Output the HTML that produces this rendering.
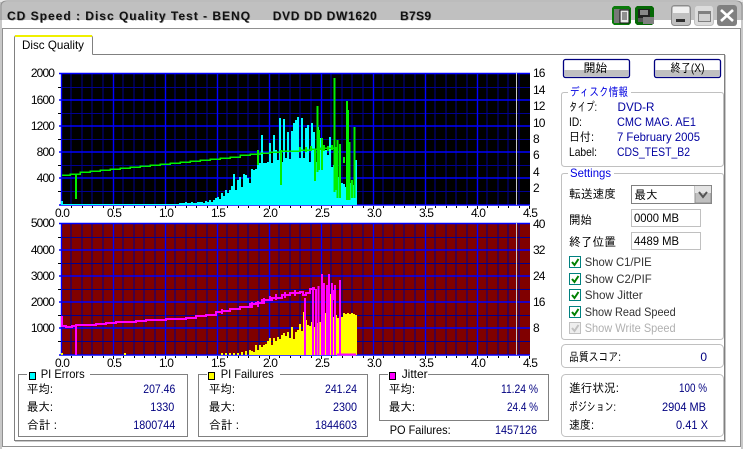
<!DOCTYPE html>
<html><head><meta charset="utf-8"><style>
html,body{margin:0;padding:0;background:#fff;overflow:hidden}
svg{display:block}
text{font-family:"Liberation Sans","IPAGothic","Noto Sans CJK JP",sans-serif;font-size:12px;fill:#000}
.n{letter-spacing:-.9px}
.v{fill:#000080}
.u{fill:#0000a0}
.e{text-anchor:end}
.m{text-anchor:middle}
.t{font-weight:bold;font-size:12px;fill:#111}
.ts{font-weight:bold;font-size:12px;fill:#8a8a8a}
.box{fill:none;stroke:#808080}
.rb{fill:none;stroke:#c0c0c0}
</style></head><body>
<svg width="743" height="449" viewBox="0 0 743 449" xmlns="http://www.w3.org/2000/svg">
<defs>
<g id="grid" fill="none">
<path shape-rendering="crispEdges" stroke="#000090" d="M71 0V132M82 0V132M92 0V132M103 0V132M123 0V132M134 0V132M144 0V132M155 0V132M175 0V132M186 0V132M196 0V132M207 0V132M227 0V132M238 0V132M248 0V132M259 0V132M279 0V132M290 0V132M300 0V132M311 0V132M331 0V132M342 0V132M352 0V132M363 0V132M383 0V132M394 0V132M404 0V132M415 0V132M435 0V132M446 0V132M456 0V132M467 0V132M487 0V132M498 0V132M508 0V132M519 0V132"/>
<path shape-rendering="crispEdges" stroke="#000090" d="M61 14.5H530M61 40.5H530M61 66.5H530M61 92.5H530M61 118.5H530"/>
<path stroke="#0000ff" stroke-width="1.4" d="M61.5 0V132M113.5 0V132M165.5 0V132M217.5 0V132M269.5 0V132M321.5 0V132M373.5 0V132M425.5 0V132M477.5 0V132"/>
<path stroke="#0000ff" stroke-width="1.4" d="M59 .5H530M59 27H530M59 53H530M59 79H530M59 105H530M59 132H530"/>
<path shape-rendering="crispEdges" stroke="#c8c8c8" d="M516.5 0V132"/>
<path shape-rendering="crispEdges" stroke="#000" d="M58 14.5H61M58 40.5H61M58 66.5H61M58 92.5H61M58 118.5H61M71.5 133V135M82.5 133V135M92.5 133V135M103.5 133V135M113.5 133V136M123.5 133V135M134.5 133V135M144.5 133V135M155.5 133V135M165.5 133V136M175.5 133V135M186.5 133V135M196.5 133V135M207.5 133V135M217.5 133V136M227.5 133V135M238.5 133V135M248.5 133V135M259.5 133V135M269.5 133V136M279.5 133V135M290.5 133V135M300.5 133V135M311.5 133V135M321.5 133V136M331.5 133V135M342.5 133V135M352.5 133V135M363.5 133V135M373.5 133V136M383.5 133V135M394.5 133V135M404.5 133V135M415.5 133V135M425.5 133V136M435.5 133V135M446.5 133V135M456.5 133V135M467.5 133V135M477.5 133V136M487.5 133V135M498.5 133V135M508.5 133V135M519.5 133V135M529.5 133V136"/>
</g>
</defs>

<!-- window frame -->
<rect width="743" height="449" fill="#fff"/>
<rect x="0" y="0" width="743" height="20" fill="#c0c0c0" shape-rendering="crispEdges"/>
<rect x="0" y="0" width="743" height="2" fill="#e8e8e8"/>
<path d="M1 449V6Q1 1 7 1H736Q742 1 742 6V449" fill="none" stroke="#909090" stroke-width="1"/>
<path shape-rendering="crispEdges" fill="none" stroke="#909090" d="M2.5 28.5H740.5V446.5H2.5Z"/>
<path shape-rendering="crispEdges" fill="none" stroke="#808080" d="M92.5 54.5H353.5H724.5V440.5H14.5V54.5"/>
<path shape-rendering="crispEdges" fill="none" stroke="#c8c8c8" d="M725.5 55V441.5H15"/>
<!-- tab -->
<path d="M14.5 54.5V38Q14.5 35.5 17 35.5H90Q92.5 35.5 92.5 38V54.5" fill="#fff" stroke="#808080"/>
<path d="M15 36H92" stroke="#f0f000" stroke-width="2"/>
<rect x="15" y="50" width="77" height="6" fill="#fff"/>
<text x="22" y="49" textLength="62" lengthAdjust="spacingAndGlyphs">Disc Quality</text>

<!-- title -->
<text class="ts" x="7.7" y="20.7" textLength="243">CD Speed : Disc Quality Test - BENQ</text>
<text class="t" x="7" y="20" textLength="243">CD Speed : Disc Quality Test - BENQ</text>
<text class="ts" x="273.4" y="20.7" textLength="104">DVD DD DW1620</text>
<text class="t" x="272.7" y="20" textLength="104">DVD DD DW1620</text>
<text class="ts" x="400.7" y="20.7" textLength="31">B7S9</text>
<text class="t" x="400" y="20" textLength="31">B7S9</text>
<!-- title icons -->
<g shape-rendering="crispEdges">
<rect x="612" y="6" width="19" height="19" rx="3" fill="#0a7a0a"/>
<rect x="614" y="9" width="15" height="14" fill="#777"/>
<rect x="620" y="10" width="9" height="13" fill="#e8e8e8" stroke="#111" stroke-width="1"/>
<path d="M622 13H627M622 15H627M622 17H627M622 19H627" stroke="#333"/>
<rect x="635" y="6" width="19" height="19" rx="3" fill="#056805"/>
<rect x="638" y="9" width="12" height="13" fill="#222"/>
<rect x="640" y="10" width="8" height="5" fill="#888"/>
<rect x="643" y="17" width="11" height="7" fill="#808080"/>
<rect x="638" y="18" width="5" height="4" fill="#555"/>
</g>
<!-- window buttons -->
<rect x="671.5" y="5.5" width="19" height="20" rx="3" fill="#c0c0c0" stroke="#8c8c8c"/>
<rect x="673" y="7" width="16" height="6" fill="#f0f0f0"/>
<rect x="676" y="19" width="9" height="3" fill="#303030"/>
<rect x="694.5" y="5.5" width="19" height="20" rx="3" fill="#dcdcdc" stroke="#c0c0c0"/>
<rect x="698.5" y="11.5" width="12" height="10" fill="#d0d0d0" stroke="#808080"/>
<rect x="699" y="12" width="11" height="2" fill="#808080"/>
<rect x="717" y="5" width="20" height="21" rx="3" fill="#808080"/>
<path d="M721 10L733 21M733 10L721 21" stroke="#fff" stroke-width="2.6"/>

<!-- chart 1 -->
<rect x="61" y="73" width="469" height="132" fill="#000" shape-rendering="crispEdges"/>
<use href="#grid" y="73"/>
<g fill="none" shape-rendering="crispEdges">
<path stroke="#00ffff" d="M62 204.5H357"/>
<path stroke="#00ffff" stroke-width="2" d="M62 205V201M180 205V203M182 205V203M184 205V203M186 205V202M188 205V203M190 205V203M192 205V202M194 205V203M196 205V203M198 205V202M200 205V202M202 205V202M204 205V203M206 205V201M208 205V202M210 205V200M212 205V202M214 205V200M216 205V198M218 205V197M220 205V199M222 205V193M224 205V196M226 205V190M228 205V193M230 205V190M232 205V186M234 205V174M236 205V190M238 205V180M240 205V177M242 205V187M244 205V174M246 205V175M248 205V178M250 205V183M252 205V169M254 205V170M256 205V169M258 205V150M260 205V163M262 205V135M264 205V163M266 205V163M268 205V162M270 205V143M272 205V163M274 205V135M276 205V150M278 205V160M280 205V118M282 205V162M284 205V119M286 205V158M288 205V132M290 205V159M292 205V131M294 205V123M296 205V120M298 205V117M300 205V158M302 205V118M304 205V158M306 205V128M308 205V125M310 205V162M312 205V123M314 205V132M316 205V162M318 205V127M320 205V138M322 205V163M324 205V147M326 205V150M328 205V155M330 205V137M332 205V167M334 205V165M336 205V160M338 205V177M340 205V180M342 205V183M344 205V184M346 205V187M348 205V185M350 205V183M352 205V180M354 205V185M356 205V160"/>
<path stroke="#00f000" stroke-width="1.5" d="M62 175H70V174H80V172H90V171H100V170H110V169H120V168H130V167H140V166H150V165H160V164H170V163H180V162H190V161H200V160H210V159H220V158H230V157H240V155H250V154H260V153H270V152H280V151H290V151H300V150H310V149H320V148H330V148H336"/>
<path stroke="#00f000" stroke-width="2" d="M76 174V199M300 147V152M306 147V152M311 146V151M324 145V151M328 146V151M332 145V150"/>
<path stroke="#00f000" stroke-width="1.6" d="M258 150V165M281 150V185M315 150V181M317.500 106V172M319 130V170M322 138V170M334.500 78V192M336 147V190M337.500 140V198M340 144V198M344 157V163M347 101V200M348 110V200M349.500 142V200M352 180V198M354.500 127V198"/>
</g>

<!-- chart 2 -->
<rect x="61" y="223" width="469" height="132" fill="#800000" shape-rendering="crispEdges"/>
<use href="#grid" y="223"/>
<g fill="none" shape-rendering="crispEdges">
<path stroke="#ffff00" stroke-width="2" d="M62 355V353M125 355V353M222 355V353M226 355V353M230 355V353M234 355V353M238 355V353M242 355V352M246 355V351M250 355V350M252 355V351M254 355V352M256 355V345M258 355V350M260 355V345M262 355V347M264 355V345M266 355V344M268 355V341M270 355V338M272 355V345M274 355V338M276 355V341M278 355V337M280 355V339M282 355V335M284 355V333M286 355V336M288 355V332M290 355V338M292 355V327M294 355V339M296 355V332M298 355V330M300 355V324M302 355V331M304 355V312M306 355V320M308 355V325M310 355V326M312 355V322M314 355V327M316 355V325M318 355V323M320 355V322M322 355V320M324 355V320M326 355V313M328 355V318M330 355V294M332 355V317M334 355V317M336 355V315M338 355V318M340 355V313M342 355V317M344 355V313M346 355V314M348 355V313M350 355V314M352 355V313M354 355V314M356 355V315"/>
<path stroke="#ff00ff" stroke-width="2" d="M62 318V326H66V327H72V326H76V325H86V325H96V324H106V323H116V322H126V322H136V321H146V320H156V320H166V319H176V319H186V318H196V316H206V315H216V312H222V311H230V309H240V307H250V304H256V303H262V300H272V298H282V295H290V293H300V292H303V295H306V293H310V289H314V287"/>
<path stroke="#ff00ff" stroke-width="2" d="M62 316V320M222 309V314M252 302V308M258 301V307M264 298V304M270 296V301M276 294V300M285 292V298M295 290V296M76 326V355"/>
<path stroke="#ff00ff" stroke-width="1.7" d="M305 298V355M313 287V355M316 289V355M318.500 286V355M322 274V355M324 283V355M327 285V355M329 274V355M332 283V355M333 290V300M335 285V355M340 280V355M337 354.500H356"/>
</g>

<!-- axis labels -->
<text class="e n" x="54" y="77">2000</text><text class="e n" x="54" y="104">1600</text><text class="e n" x="54" y="130">1200</text><text class="e n" x="54" y="156">800</text><text class="e n" x="54" y="182">400</text>
<text class="e n" x="54" y="227">5000</text><text class="e n" x="54" y="254">4000</text><text class="e n" x="54" y="280">3000</text><text class="e n" x="54" y="306">2000</text><text class="e n" x="54" y="332">1000</text>
<text class="n" x="533" y="77">16</text><text class="n" x="533" y="94">14</text><text class="n" x="533" y="110">12</text><text class="n" x="533" y="127">10</text><text class="n" x="533" y="143">8</text><text class="n" x="533" y="159">6</text><text class="n" x="533" y="176">4</text><text class="n" x="533" y="192">2</text>
<text class="n" x="533" y="228">40</text><text class="n" x="533" y="254">32</text><text class="n" x="533" y="280">24</text><text class="n" x="533" y="306">16</text><text class="n" x="533" y="332">8</text>
<text class="m n" x="62" y="217">0.0</text><text class="m n" x="114" y="217">0.5</text><text class="m n" x="166" y="217">1.0</text><text class="m n" x="218" y="217">1.5</text><text class="m n" x="270" y="217">2.0</text><text class="m n" x="322" y="217">2.5</text><text class="m n" x="374" y="217">3.0</text><text class="m n" x="426" y="217">3.5</text><text class="m n" x="478" y="217">4.0</text><text class="m n" x="530" y="217">4.5</text>
<text class="m n" x="62" y="367">0.0</text><text class="m n" x="114" y="367">0.5</text><text class="m n" x="166" y="367">1.0</text><text class="m n" x="218" y="367">1.5</text><text class="m n" x="270" y="367">2.0</text><text class="m n" x="322" y="367">2.5</text><text class="m n" x="374" y="367">3.0</text><text class="m n" x="426" y="367">3.5</text><text class="m n" x="478" y="367">4.0</text><text class="m n" x="530" y="367">4.5</text>

<!-- stat boxes -->
<g shape-rendering="crispEdges">
<path class="box" d="M27 374.500H18.500V436.500H187.500V374.500H90"/>
<rect x="29.500" y="372.500" width="6" height="7" fill="#00ffff" stroke="#000"/>
<path class="box" d="M207 374.500H198.500V436.500H367.500V374.500H280"/>
<rect x="208.500" y="372.500" width="6" height="7" fill="#ffff00" stroke="#000"/>
<path class="box" d="M388 374.500H379.500V420.500H548.500V374.500H428"/>
<rect x="389.500" y="372.500" width="6" height="7" fill="#ff00ff" stroke="#000"/>
</g>
<text x="40.700" y="378" textLength="44" lengthAdjust="spacingAndGlyphs">PI Errors</text>
<text x="220.700" y="378" textLength="53" lengthAdjust="spacingAndGlyphs">PI Failures</text>
<text x="401.700" y="378" textLength="26" lengthAdjust="spacingAndGlyphs">Jitter</text>
<text x="27" y="393" textLength="26" lengthAdjust="spacingAndGlyphs">平均:</text><text class="v e" x="175.300" y="393" textLength="32" lengthAdjust="spacingAndGlyphs">207.46</text>
<text x="27" y="411" textLength="26" lengthAdjust="spacingAndGlyphs">最大:</text><text class="v e" x="174.300" y="411" textLength="24" lengthAdjust="spacingAndGlyphs">1330</text>
<text x="27" y="429" textLength="30" lengthAdjust="spacingAndGlyphs">合計 :</text><text class="v e" x="175.300" y="429" textLength="42" lengthAdjust="spacingAndGlyphs">1800744</text>
<text x="209" y="393" textLength="26" lengthAdjust="spacingAndGlyphs">平均:</text><text class="v e" x="357" y="393" textLength="32" lengthAdjust="spacingAndGlyphs">241.24</text>
<text x="209" y="411" textLength="26" lengthAdjust="spacingAndGlyphs">最大:</text><text class="v e" x="357" y="411" textLength="24" lengthAdjust="spacingAndGlyphs">2300</text>
<text x="209" y="429" textLength="30" lengthAdjust="spacingAndGlyphs">合計 :</text><text class="v e" x="357" y="429" textLength="42" lengthAdjust="spacingAndGlyphs">1844603</text>
<text x="389" y="393" textLength="26" lengthAdjust="spacingAndGlyphs">平均:</text><text class="v e" x="538" y="393" textLength="37" lengthAdjust="spacingAndGlyphs">11.24 %</text>
<text x="389" y="411" textLength="26" lengthAdjust="spacingAndGlyphs">最大:</text><text class="v e" x="538" y="411" textLength="31" lengthAdjust="spacingAndGlyphs">24.4 %</text>
<text x="389.700" y="434" textLength="61" lengthAdjust="spacingAndGlyphs">PO Failures:</text><text class="v e" x="537" y="434" textLength="42" lengthAdjust="spacingAndGlyphs">1457126</text>

<!-- buttons -->
<rect x="563.500" y="59.500" width="66" height="18" rx="2" fill="#fff"/>
<rect x="564.500" y="70" width="64" height="6.500" fill="#c0c0c0"/>
<rect x="563.500" y="59.500" width="66" height="18" rx="2" fill="none" stroke="#000080" stroke-width="1.300"/>
<text class="m" x="595.500" y="72">開始</text>
<rect x="654.500" y="59.500" width="66" height="18" rx="2" fill="#fff"/>
<rect x="655.500" y="70" width="64" height="6.500" fill="#c0c0c0"/>
<rect x="654.500" y="59.500" width="66" height="18" rx="2" fill="none" stroke="#000080" stroke-width="1.300"/>
<text class="m" x="687.500" y="72" textLength="34" lengthAdjust="spacingAndGlyphs">終了(X)</text>

<!-- disc info -->
<path class="rb" d="M568 92.500H564Q561.500 92.500 561.500 95V163Q561.500 166.500 565 166.500H720Q723.500 166.500 723.500 163V95Q723.500 92.500 721 92.500H631"/>
<text x="570" y="96" textLength="58" lengthAdjust="spacingAndGlyphs" style="fill:#0000e0">ディスク情報</text>
<text x="569" y="111" textLength="28" lengthAdjust="spacingAndGlyphs">タイプ:</text><text class="u" x="617.500" y="111" textLength="37" lengthAdjust="spacingAndGlyphs">DVD-R</text>
<text x="569" y="126" textLength="13" lengthAdjust="spacingAndGlyphs">ID:</text><text class="u" x="617" y="126" textLength="79" lengthAdjust="spacingAndGlyphs">CMC MAG. AE1</text>
<text x="569" y="141" textLength="25" lengthAdjust="spacingAndGlyphs">日付:</text><text class="u" x="617" y="141" textLength="83" lengthAdjust="spacingAndGlyphs">7 February 2005</text>
<text x="569" y="156" textLength="28" lengthAdjust="spacingAndGlyphs">Label:</text><text class="u" x="617" y="156" textLength="73" lengthAdjust="spacingAndGlyphs">CDS_TEST_B2</text>

<!-- settings -->
<path class="rb" d="M568 173.500H564Q561.500 173.500 561.500 176V336Q561.500 339.500 565 339.500H720Q723.500 339.500 723.500 336V176Q723.500 173.500 721 173.500H614"/>
<text x="570" y="177" textLength="41" lengthAdjust="spacingAndGlyphs" style="fill:#0000e0">Settings</text>
<text x="569" y="198" textLength="47" lengthAdjust="spacingAndGlyphs">転送速度</text>
<g shape-rendering="crispEdges">
<rect x="631.500" y="185.500" width="80" height="18" fill="#fff" stroke="#808080"/>
<rect x="695" y="186" width="16" height="17" fill="#c0c0c0" stroke="#909090"/>
<rect x="695" y="186" width="16" height="7" fill="#e4e4e4"/>
</g>
<path d="M699 192L703 197L707 192" fill="none" stroke="#555" stroke-width="2"/>
<text x="634.500" y="199" textLength="23" lengthAdjust="spacingAndGlyphs">最大</text>
<text x="569" y="224" textLength="23" lengthAdjust="spacingAndGlyphs">開始</text>
<rect x="631.500" y="209.500" width="69" height="17" fill="#fff" stroke="#c0c0c0" shape-rendering="crispEdges"/>
<text x="634" y="222" textLength="45" lengthAdjust="spacingAndGlyphs">0000 MB</text>
<text x="569" y="246" textLength="47" lengthAdjust="spacingAndGlyphs">終了位置</text>
<rect x="631.500" y="232.500" width="69" height="17" fill="#fff" stroke="#c0c0c0" shape-rendering="crispEdges"/>
<text x="634" y="245" textLength="45" lengthAdjust="spacingAndGlyphs">4489 MB</text>
<g shape-rendering="crispEdges" fill="#fff" stroke="#008080">
<rect x="569.500" y="256.500" width="11" height="11"/>
<rect x="569.500" y="273.500" width="11" height="11"/>
<rect x="569.500" y="289.500" width="11" height="11"/>
<rect x="569.500" y="306.500" width="11" height="11"/>
<rect x="569.500" y="322.500" width="11" height="11" stroke="#c0c0c0" fill="#eee"/>
</g>
<g fill="none" stroke="#008000" stroke-width="2">
<path d="M572 262L574.500 265L578.500 259"/>
<path d="M572 279L574.500 282L578.500 276"/>
<path d="M572 295L574.500 298L578.500 292"/>
<path d="M572 312L574.500 315L578.500 309"/>
<path stroke="#c0c0c0" d="M572 328L574.500 331L578.500 325"/>
</g>
<text x="584.700" y="266" textLength="67" lengthAdjust="spacingAndGlyphs" style="fill:#333">Show C1/PIE</text>
<text x="584.700" y="283" textLength="67" lengthAdjust="spacingAndGlyphs" style="fill:#333">Show C2/PIF</text>
<text x="584.700" y="299" textLength="58" lengthAdjust="spacingAndGlyphs" style="fill:#333">Show Jitter</text>
<text x="584.700" y="316" textLength="91" lengthAdjust="spacingAndGlyphs" style="fill:#333">Show Read Speed</text>
<text x="584.700" y="332" textLength="91" lengthAdjust="spacingAndGlyphs" style="fill:#b0b0b0">Show Write Speed</text>

<!-- score -->
<rect x="561.500" y="344.500" width="162" height="23" rx="4" class="rb"/>
<text x="569" y="361" textLength="52" lengthAdjust="spacingAndGlyphs">品質スコア:</text><text class="v e" x="707" y="361">0</text>
<!-- progress -->
<rect x="561.500" y="374.500" width="162" height="62" rx="4" class="rb"/>
<text x="569" y="392" textLength="50" lengthAdjust="spacingAndGlyphs">進行状況:</text><text class="v e" x="707" y="392" textLength="28" lengthAdjust="spacingAndGlyphs">100 %</text>
<text x="569" y="411" textLength="47" lengthAdjust="spacingAndGlyphs">ポジション:</text><text class="v e" x="706" y="411" textLength="44" lengthAdjust="spacingAndGlyphs">2904 MB</text>
<text x="569" y="429" textLength="25" lengthAdjust="spacingAndGlyphs">速度:</text><text class="v e" x="708" y="429" textLength="32" lengthAdjust="spacingAndGlyphs">0.41 X</text>
</svg>
</body></html>
